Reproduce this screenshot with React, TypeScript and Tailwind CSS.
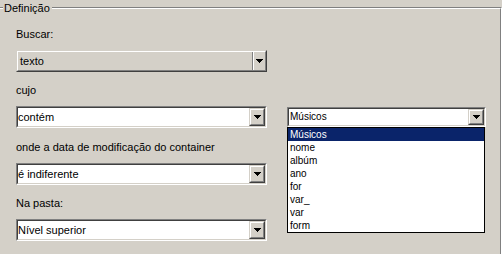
import React from "react"

const Arrow = () => (
    <svg width="7" height="4" viewBox="0 0 7 4" shapeRendering="crispEdges">
        <path d="M0 0h7v1H0zM1 1h5v1H1zM2 2h3v1H2zM3 3h1v1H3z" fill="#000" />
    </svg>
)

function DropButton() {
    return (
        <div className="h-full w-[16px] border border-t-[#d4d0c8] border-l-[#d4d0c8] border-r-[#404040] border-b-[#404040] bg-[#d4d0c8]">
            <div className="flex h-full items-center justify-center border border-t-white border-l-white border-r-[#808080] border-b-[#808080]">
                <Arrow />
            </div>
        </div>
    )
}

function RaisedCombo({ value }: { value: string }) {
    return (
        <div className="flex h-[22px] w-[251px] border border-t-[#d4d0c8] border-l-[#d4d0c8] border-r-[#404040] border-b-[#404040]">
            <div className="flex flex-1 border border-t-white border-l-white border-r-[#808080] border-b-[#808080]">
                <span className="flex-1 pl-[2px] leading-[18px]">{value}</span>
                <div className="w-px bg-[#808080]" />
                <div className="w-px bg-white" />
                <div className="flex w-[11px] items-center justify-center">
                    <Arrow />
                </div>
            </div>
        </div>
    )
}

function SunkenCombo({ value }: { value: string }) {
    return (
        <div className="flex h-[22px] w-[251px] shrink-0 border border-t-[#808080] border-l-[#808080] border-r-white border-b-white">
            <div className="flex flex-1 border border-t-[#404040] border-l-[#404040] border-r-[#d4d0c8] border-b-[#d4d0c8] bg-white">
                <span className="flex-1 leading-[18px]">{value}</span>
                <DropButton />
            </div>
        </div>
    )
}

const items = ["Músicos", "nome", "albúm", "ano", "for", "var_", "var", "form"]

function OpenCombo() {
    return (
        <div className="relative ml-[20px]">
            <div className="flex h-[20px] w-[199px] border border-t-[#808080] border-l-[#808080] border-r-white border-b-white">
                <div className="flex flex-1 border border-t-[#404040] border-l-[#404040] border-r-[#d4d0c8] border-b-[#d4d0c8] bg-white">
                    <span className="flex-1 pl-[1px] text-[10px] leading-[16px]">Músicos</span>
                    <DropButton />
                </div>
            </div>
            <ul className="absolute left-0 top-full w-[198px] border border-black bg-white text-[10px]">
                {items.map((it, i) => (
                    <li
                        key={it}
                        className={
                            i === 0
                                ? "h-[13px] bg-[#0a246a] pl-[2px] leading-[13px] text-white"
                                : "h-[13px] pl-[2px] leading-[13px]"
                        }
                    >
                        {it}
                    </li>
                ))}
            </ul>
        </div>
    )
}

export default function App() {
    return (
        <div className="h-[254px] w-[502px] overflow-hidden bg-[#d4d0c8] font-['Liberation_Sans',Arial,sans-serif] text-[11px] text-black">
            <div className="relative mt-[7px] h-[260px] border-t border-r border-t-[#808080] border-r-white">
                <div className="h-full border-t border-r border-t-white border-r-[#808080] pl-[16px] pt-[19px]">
                    <div className="h-[13px] leading-[13px]">Buscar:</div>
                    <div className="mt-[9px]">
                        <RaisedCombo value="texto" />
                    </div>

                    <div className="mt-[12px] h-[13px] leading-[13px]">cujo</div>
                    <div className="mt-[9px] flex items-center">
                        <SunkenCombo value="contém" />
                        <OpenCombo />
                    </div>

                    <div className="mt-[13px] h-[13px] leading-[13px]">onde a data de modificação do container</div>
                    <div className="mt-[9px]">
                        <SunkenCombo value="é indiferente" />
                    </div>

                    <div className="mt-[12px] h-[13px] leading-[13px]">Na pasta:</div>
                    <div className="mt-[9px]">
                        <SunkenCombo value="Nível superior" />
                    </div>
                </div>
                <span className="absolute left-[3px] top-[-6px] bg-[#d4d0c8] pl-[1px] pr-[2px] leading-[13px]">Definição</span>
            </div>
        </div>
    )
}
